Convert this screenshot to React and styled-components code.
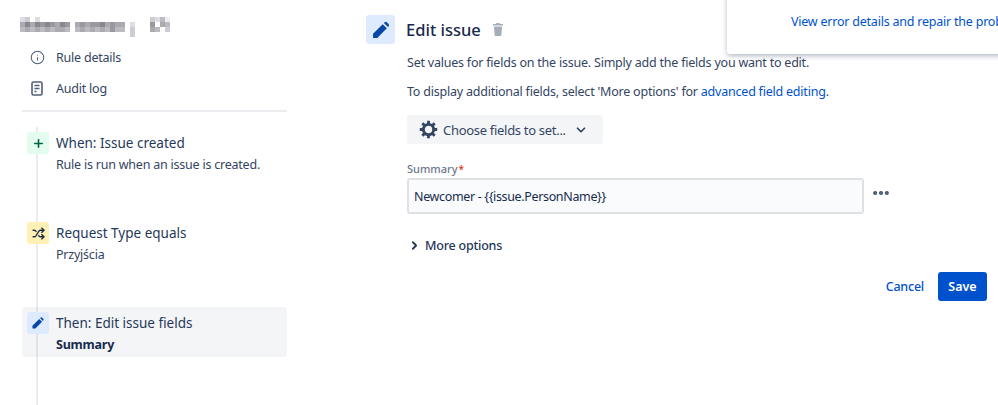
import React from "react";
import styled, { createGlobalStyle } from "styled-components";
import { ChevronDown, ChevronRight, Info, MoreHorizontal, Plus, Shuffle } from "lucide-react";

const GlobalStyle = createGlobalStyle`
  html, body {
    margin: 0;
    padding: 0;
    background: #fff;
  }
  body {
    font-family: "Noto Sans", "Open Sans", sans-serif;
    font-size: 12.5px;
    letter-spacing: -0.22px;
    color: #172b4d;
  }
  * {
    box-sizing: border-box;
  }
`;

const Pencil = ({ size }) => (
  <svg width={size} height={size} viewBox="0 0 24 24" fill="currentColor">
    <path d="M2.500 16.500 14 5l5 5L7.500 21.500h-5v-5z" />
    <path d="M15.500 3.500l.6-.6a2.200 2.200 0 0 1 3.100 0l1.800 1.800a2.200 2.200 0 0 1 0 3.100l-.6.6-4.900-4.900z" />
  </svg>
);

const Gear = () => (
  <svg width="19" height="19" viewBox="0 0 24 24" fill="none" stroke="#344563" strokeWidth="3.600">
    <circle cx="12" cy="12" r="6.500" />
    <path d="M12 1v4M12 19v4M1 12h4M19 12h4M4.200 4.200l2.800 2.800M17 17l2.800 2.800M4.200 19.800 7 17M17 7l2.800-2.800" />
  </svg>
);

const Trash = () => (
  <svg width="12" height="13" viewBox="0 0 12 13" fill="#a5adba">
    <path d="M4.500 0h3l.5 1h3v1.500H1V1h3l.5-1z" />
    <path d="M2 3.500h8l-.6 8.500a1 1 0 0 1-1 1H3.600a1 1 0 0 1-1-1L2 3.500z" />
  </svg>
);

const LogPage = () => (
  <svg width="12" height="15" viewBox="0 0 12 15" fill="none" stroke="#505f79" strokeWidth="1.600">
    <rect x="1" y="1" width="10" height="13" rx="1.500" />
    <path d="M3.500 4.500h5M3.500 7.500h5M3.500 10.500h2" />
  </svg>
);

// pixelated patch standing in for the blurred rule name, one digit per 5px cell
const mosaicRows = [
  "23.2......................3241",
  "5757676576.5656675655.2...6.54",
  "4545454554.4545454644.3...54.3",
  "......................3.......",
];

const BlurredName = () => (
  <MosaicSvg width="150" height="20" viewBox="0 0 150 20">
    {mosaicRows.map((row, y) =>
      row.split("").map((cell, x) => {
        if (cell === ".") return null;
        const v = 255 - Number(cell) * 17;
        return (
          <rect key={`${x}-${y}`} x={x * 5} y={y * 5} width="5" height="5" fill={`rgb(${v},${v},${v + 6})`} />
        );
      })
    )}
  </MosaicSvg>
);

function App() {
  return (
    <Page>
      <GlobalStyle />
      <Sidebar>
        <RuleName>
          <BlurredName />
        </RuleName>
        <NavItem>
          <NavIcon>
            <Info size={15} strokeWidth={1.700} />
          </NavIcon>
          Rule details
        </NavItem>
        <NavItem>
          <NavIcon>
            <LogPage />
          </NavIcon>
          Audit log
        </NavItem>
        <Divider />
        <Timeline>
          <Step>
            <StepIcon $bg="#e3fcef" $color="#006644">
              <Plus size={13} strokeWidth={3} />
            </StepIcon>
            <div>
              <StepTitle>When: Issue created</StepTitle>
              <StepText>Rule is run when an issue is created.</StepText>
            </div>
          </Step>
          <Step>
            <StepIcon $bg="#fff0b3" $color="#172b4d">
              <Shuffle size={13} strokeWidth={2.400} />
            </StepIcon>
            <div>
              <StepTitle>Request Type equals</StepTitle>
              <StepText>Przyjścia</StepText>
            </div>
          </Step>
          <Step $active>
            <StepIcon $bg="#deebff" $color="#0747a6">
              <Pencil size={14} />
            </StepIcon>
            <div>
              <StepTitle>Then: Edit issue fields</StepTitle>
              <StepText $bold>Summary</StepText>
            </div>
          </Step>
        </Timeline>
      </Sidebar>

      <Main>
        <Header>
          <HeaderIcon>
            <Pencil size={20} />
          </HeaderIcon>
          <Heading>Edit issue</Heading>
          <Trash />
        </Header>
        <Content>
          <Paragraph>Set values for fields on the issue. Simply add the fields you want to edit.</Paragraph>
          <Paragraph>
            To display additional fields, select 'More options' for <Link>advanced field editing</Link>.
          </Paragraph>
          <ChooseButton>
            <Gear />
            Choose fields to set...
            <ChevronDown size={14} strokeWidth={3} />
          </ChooseButton>
          <FieldLabel>
            Summary<Required>*</Required>
          </FieldLabel>
          <FieldRow>
            <Input>{"Newcomer - {{issue.PersonName}}"}</Input>
            <MoreIcon size={20} strokeWidth={3} />
          </FieldRow>
          <MoreOptions>
            <ChevronRight size={13} strokeWidth={3.400} />
            More options
          </MoreOptions>
          <Actions>
            <CancelButton>Cancel</CancelButton>
            <SaveButton>Save</SaveButton>
          </Actions>
        </Content>
      </Main>

      <ErrorBanner>
        <BannerLink>View error details and repair the problem.</BannerLink>
      </ErrorBanner>
    </Page>
  );
}

const Page = styled.div`
  position: relative;
  display: flex;
  width: 998px;
  height: 405px;
  overflow: hidden;
  background: #fff;
`;

const Sidebar = styled.aside`
  width: 265px;
  margin-left: 22px;
  flex-shrink: 0;
`;

const MosaicSvg = styled.svg`
  display: block;
  filter: blur(0.7px);
`;

const RuleName = styled.div`
  height: 42px;
  padding-top: 17px;
  margin-left: -2px;
`;

const NavItem = styled.div`
  display: flex;
  align-items: center;
  height: 31px;
  color: #344563;
`;

const NavIcon = styled.span`
  display: flex;
  justify-content: center;
  width: 30px;
  margin-right: 4px;
  color: #505f79;
`;

const Divider = styled.div`
  height: 2px;
  margin-top: 6px;
  background: #ebecf0;
`;

const Timeline = styled.div`
  position: relative;
  display: flex;
  flex-direction: column;
  gap: 40px;
  margin-top: 15px;
  height: 300px;

  &::before {
    content: "";
    position: absolute;
    left: 14px;
    top: 0;
    bottom: 0;
    width: 2px;
    background: #ebecf0;
  }
`;

const Step = styled.div`
  position: relative;
  display: flex;
  flex-shrink: 0;
  gap: 7px;
  height: 50px;
  padding: 5px;
  border-radius: 3px;
  background: ${(p) => (p.$active ? "rgba(9, 30, 66, 0.045)" : "transparent")};
`;

const StepIcon = styled.span`
  display: flex;
  align-items: center;
  justify-content: center;
  flex-shrink: 0;
  width: 22px;
  height: 22px;
  border-radius: 3px;
  background: ${(p) => p.$bg};
  color: ${(p) => p.$color};
`;

const StepTitle = styled.div`
  font-size: 13.500px;
  letter-spacing: 0;
  line-height: 23px;
  color: #253858;
`;

const StepText = styled.div`
  line-height: 20px;
  font-weight: ${(p) => (p.$bold ? 700 : 400)};
  color: ${(p) => (p.$bold ? "#172b4d" : "#344563")};
`;

const Main = styled.main`
  margin-left: 79px;
  padding-top: 15px;
  flex: 1;
`;

const Header = styled.div`
  display: flex;
  align-items: center;
  height: 29px;
`;

const HeaderIcon = styled.span`
  display: flex;
  align-items: center;
  justify-content: center;
  width: 29px;
  height: 29px;
  margin-right: 11px;
  border-radius: 3px;
  background: #deebff;
  color: #0747a6;
`;

const Heading = styled.h1`
  margin: 0 11px 0 0;
  font-size: 16.500px;
  letter-spacing: 0;
  font-weight: 500;
  color: #172b4d;
`;

const Content = styled.div`
  margin-left: 41px;
  margin-right: 11px;
`;

const Paragraph = styled.p`
  margin: 0 0 9px;
  line-height: 20px;
  color: #344563;

  &:first-child {
    margin-top: 9px;
  }
`;

const Link = styled.a`
  color: #0052cc;
`;

const ChooseButton = styled.button`
  display: flex;
  align-items: center;
  gap: 5px;
  width: 196px;
  height: 29px;
  margin-top: 13px;
  padding: 0 0 0 12px;
  border: none;
  border-radius: 3px;
  background: #f4f5f7;
  color: #344563;
  font: inherit;
  font-size: 13px;
  letter-spacing: -0.3px;

  svg:last-child {
    margin-left: 3px;
  }
`;

const FieldLabel = styled.div`
  margin-top: 17px;
  font-size: 11px;
  line-height: 16px;
  font-weight: 500;
  letter-spacing: 0;
  color: #6b778c;
`;

const Required = styled.span`
  margin-left: 1px;
  font-size: 10px;
  color: #de350b;
`;

const FieldRow = styled.div`
  display: flex;
  align-items: center;
  gap: 7px;
  margin-top: 1px;
`;

const Input = styled.div`
  display: flex;
  align-items: center;
  width: 457px;
  height: 36px;
  padding-left: 5px;
  border: 2px solid #dfe1e6;
  border-radius: 3px;
  background: #fafbfc;
  letter-spacing: -0.35px;
  color: #172b4d;
`;

const MoreIcon = styled(MoreHorizontal)`
  margin-bottom: 6px;
  color: #42526e;
`;

const MoreOptions = styled.div`
  display: flex;
  align-items: center;
  gap: 4px;
  margin-top: 23px;
  margin-left: 1px;
  font-weight: 500;
  color: #253858;
`;

const Actions = styled.div`
  display: flex;
  justify-content: flex-end;
  align-items: center;
  gap: 14px;
  margin-top: 18px;
`;

const CancelButton = styled.span`
  font-weight: 500;
  color: #0052cc;
`;

const SaveButton = styled.button`
  width: 49px;
  height: 29px;
  border: none;
  border-radius: 3px;
  background: #0052cc;
  color: #fff;
  font: inherit;
  font-weight: 600;
`;

const ErrorBanner = styled.div`
  position: absolute;
  top: -10px;
  left: 727px;
  width: 320px;
  height: 64px;
  padding: 23px 0 0 64px;
  background: #fff;
  border-radius: 3px;
  box-shadow: 0 2px 5px rgba(9, 30, 66, 0.3);
`;

const BannerLink = styled.a`
  white-space: nowrap;
  color: #0052cc;
`;

export default App;
